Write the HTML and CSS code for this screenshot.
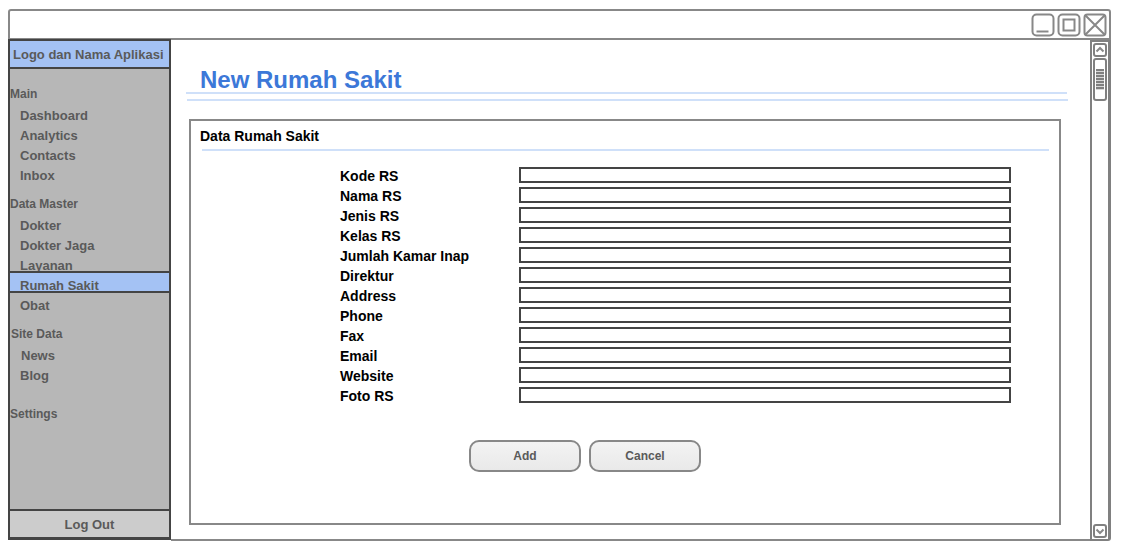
FILE: index.html
```html
<!DOCTYPE html>
<html lang="id">
<head>
<meta charset="utf-8">
<title>New Rumah Sakit</title>
<link rel="stylesheet" href="styles.css">
</head>
<body>
<div class="window">
  <header class="titlebar">
    <button class="win-btn" type="button" aria-label="Minimize"><svg viewBox="0 0 24 24"><rect x="1.500" y="1.500" width="21" height="21" rx="4"/><path d="M5.500 18.500H17.500"/></svg></button>
    <button class="win-btn" type="button" aria-label="Maximize"><svg viewBox="0 0 24 24"><rect x="1.500" y="1.500" width="21" height="21" rx="4"/><rect x="6.500" y="6.500" width="11" height="11"/></svg></button>
    <button class="win-btn" type="button" aria-label="Close"><svg viewBox="0 0 24 24"><rect x="1.500" y="1.500" width="21" height="21" rx="3"/><path d="M2 2L22 22M22 2L2 22"/></svg></button>
  </header>
  <div class="workspace">
    <aside class="sidebar">
      <div class="brand">Logo dan Nama Aplikasi</div>
      <nav class="nav">
        <h2 class="nav-title">Main</h2>
        <ul class="nav-list">
          <li><a class="nav-link" href="#">Dashboard</a></li>
          <li><a class="nav-link" href="#">Analytics</a></li>
          <li><a class="nav-link" href="#">Contacts</a></li>
          <li><a class="nav-link" href="#">Inbox</a></li>
        </ul>
        <h2 class="nav-title">Data Master</h2>
        <ul class="nav-list">
          <li><a class="nav-link" href="#">Dokter</a></li>
          <li><a class="nav-link" href="#">Dokter Jaga</a></li>
          <li><a class="nav-link" href="#">Layanan</a></li>
          <li class="nav-item-active"><a class="nav-link nav-link-active" href="#" aria-current="page">Rumah Sakit</a></li>
          <li><a class="nav-link" href="#">Obat</a></li>
        </ul>
        <h2 class="nav-title nav-title-site">Site Data</h2>
        <ul class="nav-list">
          <li><a class="nav-link nav-link-news" href="#">News</a></li>
          <li><a class="nav-link" href="#">Blog</a></li>
        </ul>
        <h2 class="nav-title nav-title-settings">Settings</h2>
      </nav>
      <button class="logout" type="button">Log Out</button>
    </aside>
    <main class="content">
      <h1 class="page-title">New Rumah Sakit</h1>
      <div class="rule"></div>
      <div class="rule rule-second"></div>
      <form class="panel">
        <h2 class="panel-title">Data Rumah Sakit</h2>
        <div class="fields">
          <label for="kode">Kode RS</label><input id="kode" type="text">
          <label for="nama">Nama RS</label><input id="nama" type="text">
          <label for="jenis">Jenis RS</label><input id="jenis" type="text">
          <label for="kelas">Kelas RS</label><input id="kelas" type="text">
          <label for="kamar">Jumlah Kamar Inap</label><input id="kamar" type="text">
          <label for="direktur">Direktur</label><input id="direktur" type="text">
          <label for="address">Address</label><input id="address" type="text">
          <label for="phone">Phone</label><input id="phone" type="text">
          <label for="fax">Fax</label><input id="fax" type="text">
          <label for="email">Email</label><input id="email" type="text">
          <label for="website">Website</label><input id="website" type="text">
          <label for="foto">Foto RS</label><input id="foto" type="text">
        </div>
        <div class="actions">
          <button class="btn" type="button">Add</button>
          <button class="btn" type="button">Cancel</button>
        </div>
      </form>
    </main>
    <div class="scrollbar">
      <button class="scroll-btn" type="button" aria-label="Scroll up"><svg viewBox="0 0 10 10"><path d="M1.500 6.500L5 3L8.500 6.500"/></svg></button>
      <div class="thumb"><div class="grip"></div></div>
      <button class="scroll-btn scroll-down" type="button" aria-label="Scroll down"><svg viewBox="0 0 10 10"><path d="M1.500 3.500L5 7L8.500 3.500"/></svg></button>
    </div>
  </div>
</div>
</body>
</html>
```
FILE: styles.css
```css
* {
  box-sizing: border-box;
}

body {
  margin: 0;
  padding: 9px 19px 19px 8px;
  background: #fff;
  color: #000;
  font-family: "Liberation Sans", Arial, sans-serif;
  font-weight: bold;
}

h1, h2, ul {
  margin: 0;
  padding: 0;
}

button {
  font: inherit;
  padding: 0;
}

.window {
  display: flex;
  flex-direction: column;
  min-height: calc(100vh - 28px);
}

.titlebar {
  display: flex;
  justify-content: flex-end;
  align-items: center;
  gap: 2px;
  height: 31px;
  padding-right: 2px;
  border: 2px solid #888;
  border-radius: 3px 3px 0 0;
}

.win-btn {
  width: 24px;
  height: 24px;
  border: 0;
  background: none;
}

.win-btn svg, .scroll-btn svg {
  display: block;
  fill: none;
  stroke: #888;
  stroke-width: 2;
}

.workspace {
  display: flex;
  flex: 1;
  margin-top: -1px;
}

.sidebar {
  display: flex;
  flex-direction: column;
  width: 163px;
  margin-bottom: 1px;
  border: 2px solid #444;
  border-bottom-width: 3px;
  background: #b7b7b7;
  color: #5a5a5a;
  font-size: 13px;
}

.brand {
  height: 28px;
  padding-left: 3px;
  border-bottom: 2px solid #444;
  background: #a4c2f4;
  line-height: 28px;
  white-space: nowrap;
}

.nav {
  flex: 1;
  padding-top: 15px;
}

.nav-title {
  padding-bottom: 2px;
  font-size: 12px;
  line-height: 20px;
}

.nav-title-site {
  padding-left: 1px;
}

.nav-title-settings {
  margin-top: 10px;
}

.nav-list {
  padding-bottom: 8px;
  list-style: none;
}

.nav-link {
  display: block;
  height: 20px;
  padding-left: 10px;
  color: inherit;
  line-height: 20px;
  text-decoration: none;
}

.nav-item-active {
  position: relative;
}

.nav-link-active {
  height: 22px;
  margin: -5px 0 3px;
  padding-top: 3px;
  border: solid #444;
  border-width: 2px 0;
  background: #a4c2f4;
}

.nav-link-news {
  padding-left: 11px;
}

.logout {
  height: 28px;
  border: 0;
  border-top: 2px solid #444;
  background: #ccc;
  color: inherit;
}

.content {
  display: flex;
  flex: 1;
  flex-direction: column;
  min-width: 0;
  padding: 27px 22px 14px 15px;
  border-bottom: 2px solid #888;
}

.page-title {
  height: 26px;
  padding-left: 14px;
  color: #3c78d8;
  font-size: 24px;
  line-height: 28px;
}

.rule {
  height: 2px;
  margin-right: 1px;
  background: #cfe0f9;
}

.rule-second {
  margin: 5px 0 0 1px;
}

.panel {
  flex: 1;
  margin: 18px 7px 0 3px;
  padding: 0 9px;
  border: 2px solid #888;
}

.panel-title {
  height: 30px;
  margin: 0 1px 0 2px;
  border-bottom: 2px solid #cfe0f9;
  font-size: 14px;
  line-height: 30px;
  text-indent: -2px;
}

.fields {
  display: grid;
  grid-template-columns: 179px 1fr;
  grid-auto-rows: 20px;
  margin-top: 15px;
  padding: 0 39px 0 140px;
  font-size: 14px;
  line-height: 20px;
}

.fields input {
  width: 100%;
  min-width: 0;
  height: 16px;
  margin: 1px 0 0;
  padding: 0 4px;
  border: 2px solid #444;
  border-radius: 0;
  background: #fff;
  font-size: 10px;
}

.actions {
  display: flex;
  gap: 8px;
  margin-top: 34px;
  padding-left: 269px;
}

.btn {
  width: 112px;
  height: 32px;
  border: 2px solid #888;
  border-radius: 10px;
  background: linear-gradient(#f3f3f3, #e9e9e9);
  color: #5a5a5a;
  font-size: 12px;
}

.scrollbar {
  display: flex;
  flex-direction: column;
  align-items: center;
  gap: 1px;
  width: 21px;
  margin-top: 1px;
  padding: 1px 0;
  border: 2px solid #808080;
  border-right-width: 3px;
  border-radius: 0 0 3px 0;
}

.scroll-btn {
  width: 14px;
  height: 14px;
  border: 2px solid #808080;
  border-radius: 3px;
  background: #fff;
}

.scroll-down {
  margin-top: auto;
}

.thumb {
  width: 14px;
  height: 43px;
  padding: 9px 1px;
  border: 2px solid #808080;
  border-radius: 3px;
}

.grip {
  height: 21px;
  background: repeating-linear-gradient(#808080 0 2px, #d8d8d8 2px 3px);
}
```
